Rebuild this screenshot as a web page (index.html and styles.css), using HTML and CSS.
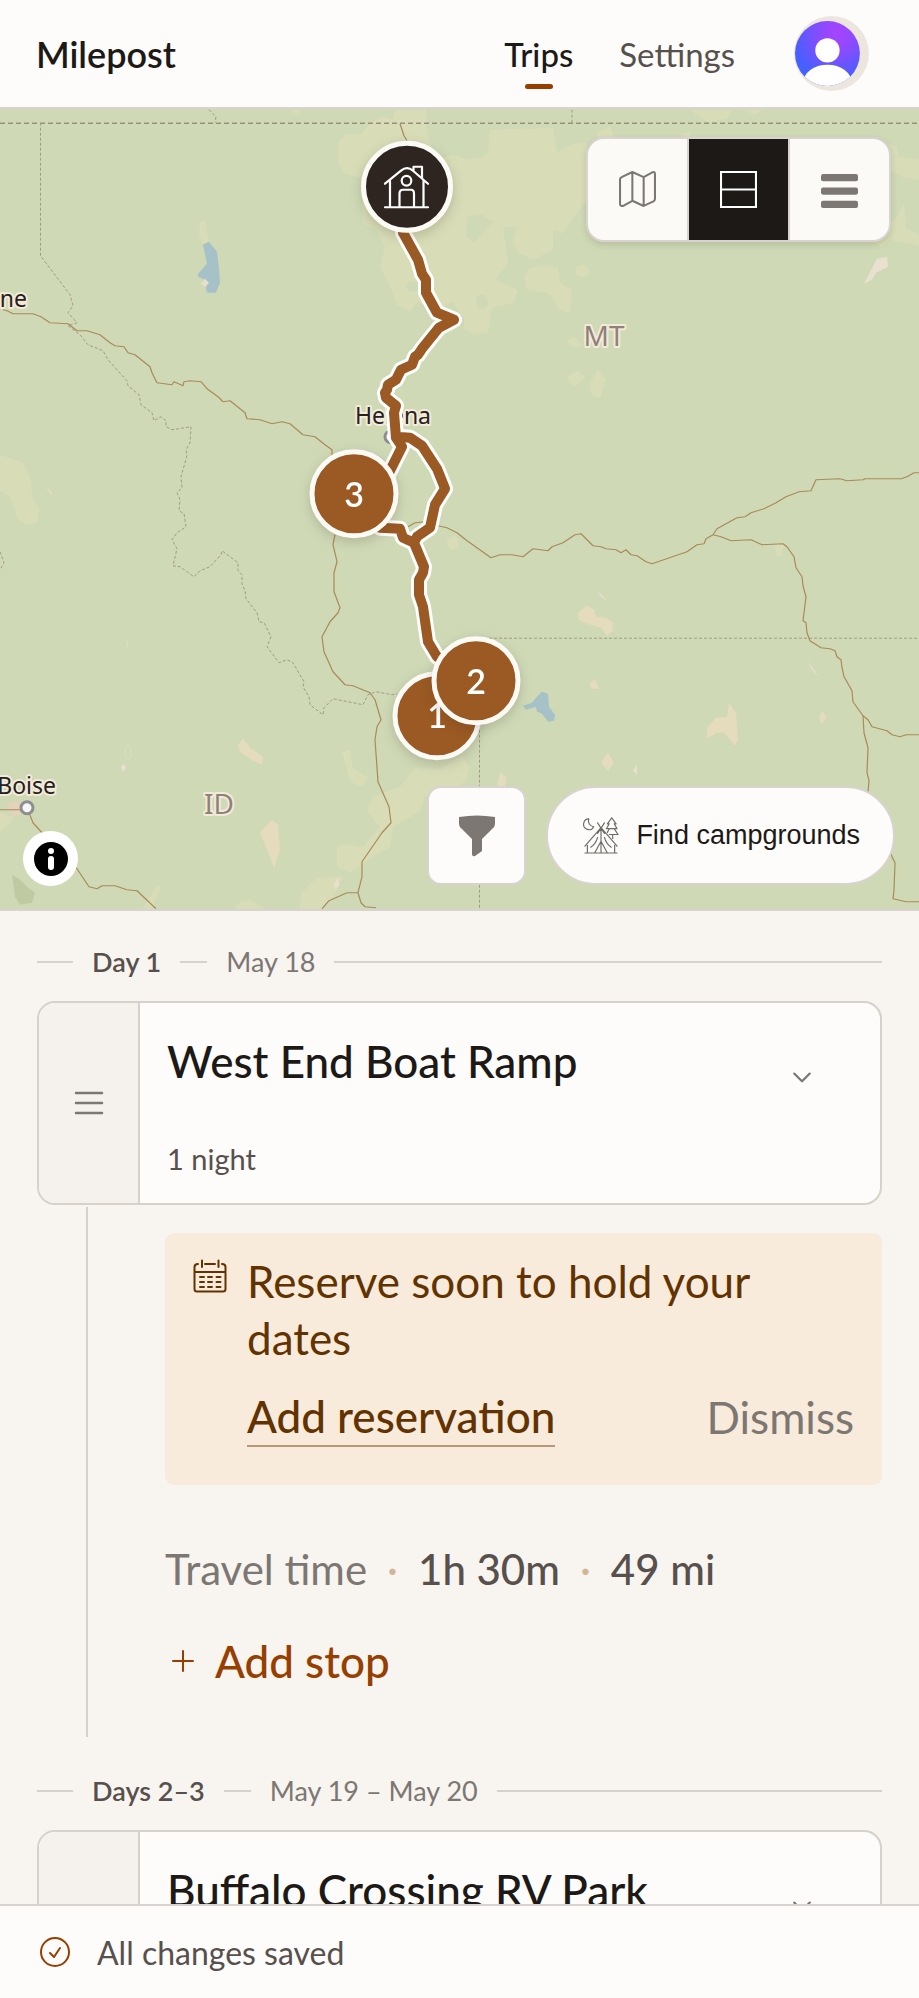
FILE: index.html
```html
<!DOCTYPE html>
<html lang="en">
<head>
    <meta charset="UTF-8">
    <meta name="viewport" content="width=device-width, initial-scale=1.0">
    <title>Milepost - Trips</title>
    <link rel="stylesheet" href="styles.css">
</head>
<body>

    <header class="topbar">
        <a href="#" class="brand">Milepost</a>
        <nav class="nav">
            <a href="#" class="nav-link active">Trips</a>
            <a href="#" class="nav-link">Settings</a>
        </nav>
        <button class="avatar" aria-label="Account">
            <svg viewBox="0 0 74 74">
                <defs>
                    <radialGradient id="avatarFill" cx="0.65" cy="0.2" r="0.7">
                        <stop offset="0" stop-color="#a544ff"/>
                        <stop offset="0.3" stop-color="#9448ff"/>
                        <stop offset="1" stop-color="#4560ff"/>
                    </radialGradient>
                    <clipPath id="avatarClip"><circle cx="33" cy="37" r="32"/></clipPath>
                </defs>
                <circle cx="37" cy="37" r="37" fill="#ece6df"/>
                <circle cx="33" cy="37" r="32" fill="url(#avatarFill)"/>
                <g clip-path="url(#avatarClip)" fill="#fff">
                    <circle cx="33" cy="34" r="12"/>
                    <ellipse cx="33" cy="66" rx="24" ry="18"/>
                </g>
            </svg>
        </button>
    </header>

    <section class="map">
        <svg class="map-canvas" viewBox="0 109 919 801" preserveAspectRatio="xMidYMid slice" role="img" aria-label="Trip route map">
            <rect x="-500" y="-500" width="2000" height="2000" fill="#cfd9b6"/>

            <!-- grassland -->
            <g fill="#d8dcb7">
                <path d="M338 143L346 134L360 135L372 122L384 117L393 120L395 110L426 110L427 133L431 146L441 160L450 155L459 156L466 160L480 158L488 153L490 130L553 128L557 153L572 144L587 143L587 200L583 205L567 227L553 250L533 260L517 252L513 242L517 227L503 227L508 263L495 280L518 290L513 303L492 308L488 332L477 335L465 330L463 317L452 302L435 312L418 302L410 312L397 305L390 287L380 267L385 247L375 228L363 225L362 205L370 180L345 174L338 163Z"/>
                <path d="M524 278L530 268L545 266L558 268L560 283L572 290L570 314L560 310L548 293L527 290Z"/>
                <ellipse cx="582" cy="271" rx="7" ry="6"/>
                <path d="M567 341L574 337L582 345L574 348Z"/>
                <path d="M568 377L577 371L585 377L576 387L569 382Z"/>
                <path d="M590 383L598 370L606 380L600 398L592 396Z"/>
                <ellipse cx="453" cy="543" rx="6" ry="7"/>
                <path d="M0 455L23 463L31 480L32 498L39 508L37 523L27 525L18 520L10 497L0 491Z"/>
                <path d="M689 110L732 110L727 119L708 122Z"/>
                <path d="M742 110L762 110L755 115Z"/>
                <path d="M598 132L610 127L613 134L609 140L598 140Z"/>
                <path d="M682 134L690 132L691 140L680 140Z"/>
                <path d="M889 144L897 147L898 157L919 160L919 180L905 178L889 170Z"/>
                <path d="M897 217L904 204L906 228L919 235L919 246L900 242L889 240L882 248L872 240Z"/>
                <path d="M291 110L301 110L296 115Z"/>
                <path d="M200 223L205 220L209 242L203 244L199 236Z"/>
                <path d="M342 752L350 750L353 768L368 778L362 787L350 782Z"/>
                <path d="M415 768L440 770L462 756L469 767L467 779L459 787L459 797L425 797L420 812L393 827L390 847L373 857L350 873L337 867L337 847L345 845L363 847L380 827L367 812L373 797L400 787Z"/>
                <path d="M300 909L302 893L317 878L343 877L335 895L322 909Z"/>
                <path d="M235 909L240 902L250 900L265 909Z"/>
                <path d="M143 909L157 885L161 887L152 909Z"/>
                <path d="M0 812L14 818L0 833Z"/>
                <path d="M775 545L784 544L781 557L776 555Z"/>
            </g>
            <g fill="#cfd9b6">
                <path d="M467 217L482 215L493 222L475 243L466 237Z"/>
                <ellipse cx="482" cy="302" rx="6" ry="7"/>
                <ellipse cx="413" cy="287" rx="7" ry="5"/>
                <path d="M553 230L565 235L562 246L553 250Z"/>
            </g>

            <!-- urban and bare ground -->
            <g fill="#e5dcbd">
                <path d="M238 745L243 739L250 748L263 757L262 765L253 761L240 752Z"/>
                <path d="M260 833L272 820L278 825L280 850L274 868L267 850Z"/>
                <path d="M578 613L587 606L594 610L596 617L606 618L613 623L612 632L607 636L601 628L584 623L579 620Z"/>
                <path d="M707 728L716 718L727 717L729 703L736 713L738 740L735 746L724 733L716 733L707 739Z"/>
                <path d="M589 684L595 679L599 689L592 689Z"/>
                <path d="M601 763L608 753L614 763L608 771Z"/>
                <path d="M819 718L823 711L826 718L822 724Z"/>
                <path d="M497 787L500 773L506 776L505 787Z"/>
            </g>
            <g fill="#e9e1cf">
                <path d="M877 259L887 257L888 267L876 273L872 280L864 284Z"/>
                <path d="M633 771L637 765L637 775Z"/>
                <path d="M121 767L124 764L126 768L123 772Z"/>
                <path d="M334 885L338 878L339 886L335 889Z"/>
                <path d="M598 592L608 601L601 597Z"/>
                <path d="M807 661L819 677L812 670Z"/>
                <path d="M46 487L52 496L51 492Z"/>
                <path d="M126 636L129 652L127 645Z"/>
                <path d="M8 803L18 801L22 812L14 817L7 811Z" fill="#e3d3ba"/>
            </g>
            <ellipse cx="128" cy="753" rx="3" ry="7" fill="none" stroke="#dfdfbd"/>
            <path d="M12 875L20 880L27 887L35 893L32 903L20 905L15 897Z" fill="#bfc9a2"/>

            <!-- lakes -->
            <g fill="#a6c1c7">
                <path d="M203 245L209 242L217 252L219 268L220 283L216 293L207 293L206 288L208 283L203 279L198 277L198 274L207 264Z"/>
                <path d="M523 706L532 703L536 698L542 692L548 694L549 707L555 715L554 721L548 722L542 714L537 712L536 707L526 710Z"/>
            </g>
            <path d="M201 284L205 279L209 283L205 287Z" fill="#e6dfca"/>

            <!-- state and country borders -->
            <path d="M0 123.5H919" fill="none" stroke="#98907b" stroke-width="1.4" stroke-dasharray="5 3"/>
            <g fill="none" stroke="#a09b83" stroke-dasharray="3 2">
                <path d="M209 110L216 117L215 123M572 110V123M479.500 725V910M489 638.500H919M0 552L4 563L0 570"/>
                <path d="M40.500 123V256L70 295L73 306L68 313L77 323L68 326L80 335L88 345L103 351L108 360L127 381L128 386L139 395L141 405L152 413L154 421L161 417L166 421L166 427L172 430L191 427L190 443L186 450L187 456L181 477L182 488L177 493L180 500L179 511L184 514L186 527L177 533L172 540L177 549L173 566L180 567L194 577L200 571L210 567L221 555L222 551L238 563L238 571L242 575L242 584L245 591L246 599L257 613L259 622L264 623L271 637L267 647L279 663L287 660L293 663L304 682L303 687L309 697L310 705L323 715L324 708L333 699L363 705L368 695L376 692L392 695L397 694"/>
            </g>

            <!-- roads -->
            <g fill="none" stroke="#a98a58" stroke-width="1.2" stroke-linejoin="round">
                <path d="M3 310L7 311L13 314H33L41 317L50 323L68 324L77 331L87 331L100 335L110 343L115 346L124 347L128 353L135 355L150 367L152 373L157 383L172 385L174 382L183 386L184 382L190 381L201 382L207 389L218 397L223 402L230 401L245 413L247 419L260 420L272 424L282 422L290 424L303 435L315 437L325 445L332 450V494"/>
                <path d="M335 535L333 545L337 562L334 573V592L340 608L338 613L330 622L322 637L324 652L333 672L345 685L353 686L370 693L375 700L381 720L377 727L375 740L378 782L389 807L391 823L382 833L362 862V877L358 893L361 903L365 907L376 908M358 893H347L329 901L322 909"/>
                <path d="M408 527L415 523L425 522L438 526L447 528L457 533L467 541L477 548L491 558L500 555L512 555L523 557L533 549L548 551L552 547L563 543L575 535L581 534L593 546L601 547L606 549L616 550L621 553L626 550L631 555L637 556L646 562L652 564L687 552L697 545L704 544L706 539L713 535L717 529L737 518L745 517L751 513L764 509L776 503L786 497L799 492L811 491L816 480L840 479L847 481L863 480L865 479H901L907 477L914 473H919"/>
                <path d="M713 535L721 537L731 541L751 540L762 545L783 544L787 547L794 557L796 568L802 577L803 586L806 597L803 621L806 623L807 633L810 641L821 648L830 649L835 651L837 657L841 660L842 668L844 677L852 691L853 702L863 716L868 720L872 727L887 731L892 735L900 737L906 735L919 735"/>
                <path d="M863 716L864 733L868 748L867 773L869 781L868 792L892 857L895 863L894 890L893 899L906 902H919"/>
                <path d="M0 810H20L27 808L33 823L42 833L77 869L89 887L97 889L102 886H115L127 890L137 891L156 909"/>
                <path d="M400 124L404 136L407 141"/>
            </g>

            <!-- towns and states -->
            <circle cx="391" cy="437" r="6" fill="#fff" stroke="#8d8d92" stroke-width="3"/>
            <circle cx="27" cy="808" r="6" fill="#f6f6f6" stroke="#8d8d92" stroke-width="3"/>
            <text class="town" x="393" y="424" text-anchor="middle">Helena</text>
            <text class="town" x="56" y="794" text-anchor="end">Boise</text>
            <text class="town" x="27" y="307" text-anchor="end">ne</text>
            <text class="state" x="604" y="346" text-anchor="middle">MT</text>
            <text class="state" x="219" y="814" text-anchor="middle">ID</text>

            <!-- trip route, casing first -->
            <defs>
                <path id="route" d="M403 228V233L418 260L422 274L426 280V293L437 313L454 320L439 328L422 349L418 355L415 357L412 365L401 370L396 380L388 385L387 390L385 393L386 398L396 406L394 413L396 438L402 447L388 475L354 494L380 528L400 529L403 538L414 543L424 567L423 573L419 580V595L423 607L428 642L437 657L470 680M396 437L410 438L422 446L437 469L445 489L435 505L430 528L417 537L414 543"/>
            </defs>
            <use href="#route" class="route-casing"/>
            <use href="#route" class="route-line"/>

            <g class="pin">
                <circle cx="437" cy="716" r="42"/>
                <text x="437" y="728">1</text>
            </g>
            <g class="pin">
                <circle cx="476" cy="681" r="42"/>
                <text x="476" y="694">2</text>
            </g>
            <g class="pin">
                <circle cx="354" cy="494" r="42"/>
                <text x="354" y="507">3</text>
            </g>
            <g class="pin pin-home">
                <circle cx="407" cy="187" r="43.500"/>
                <g fill="none" stroke="#fff" stroke-width="2.200" stroke-linecap="round" stroke-linejoin="round">
                    <path d="M385 207.500H428M390 207V181M423.500 207V181M385 184L401 171Q407 166 413 171L428 184M413.500 171V167H422V178"/>
                    <path d="M399.500 207V194Q399.500 190 403 190H411Q414 190 414 194V207"/>
                    <circle cx="406.500" cy="181" r="4.800"/>
                </g>
            </g>
        </svg>

        <div class="view-switch" role="group" aria-label="View">
            <button aria-label="Map view">
                <svg class="icon" viewBox="0 0 36 36" fill="none" stroke="currentColor" stroke-width="2" stroke-linejoin="round">
                    <path d="M1 8Q1 6.500 2.500 6L13 1L24 6L32 1.500Q35 0 35 3V27Q35 28.500 33.500 29.500L24 34L13 29L5 33.500Q1 35 1 32ZM13 1V29M24 6V34"/>
                </svg>
            </button>
            <button class="selected" aria-label="Split view" aria-pressed="true">
                <svg class="icon" viewBox="0 0 36 36" fill="none" stroke="currentColor" stroke-width="2">
                    <path d="M1 1H35V35H1ZM1 18H35"/>
                </svg>
            </button>
            <button aria-label="List view">
                <svg class="icon" viewBox="0 0 36 36" fill="currentColor">
                    <rect y="3" width="36" height="7" rx="2"/>
                    <rect y="16" width="36" height="7" rx="2"/>
                    <rect y="29" width="36" height="7" rx="2"/>
                </svg>
            </button>
        </div>

        <button class="map-info" aria-label="Map attribution">
            <svg viewBox="0 0 34 34">
                <circle cx="17" cy="17" r="17"/>
                <circle cx="17" cy="9" r="3" fill="#fff"/>
                <rect x="14" y="14" width="6" height="14" rx="3" fill="#fff"/>
            </svg>
        </button>

        <div class="map-actions">
            <button class="filter-btn" aria-label="Filter">
                <svg viewBox="0 0 38 42" fill="currentColor">
                    <path d="M1 2Q19 -1 37 2V9Q37 12 34 14L24 24V36L17 41Q14 42 14 39V24L4 14Q1 12 1 9Z"/>
                </svg>
            </button>
            <button class="find-btn">
                <svg class="icon" viewBox="0 0 36 38" fill="none" stroke="#6f6b67" stroke-width="1.200" stroke-linecap="round" stroke-linejoin="round">
                    <path d="M5 2A5.500 5.500 0 1 0 10 10A6 6 0 0 1 5 2Z"/>
                    <path d="M14 6L21 17M21 6L14 17M17.500 11L1 30M17.500 11L34 30M1 37H34M3.500 29V37M31.500 29V37M17.500 13V25L11 37M17.500 25L24 37M17.500 27V37M14 21Q12 28 7 31M21 21Q23 28 28 31"/>
                    <path d="M28.500 1L24 7H26L23 12H26M28.500 1L33 7H31L34 12H24M26 12L24 16M31 12L35 18H26M29.500 18V22"/>
                </svg>
                Find campgrounds
            </button>
        </div>
    </section>

    <main class="itinerary">
        <h2 class="day-head">
            <span class="day-label">Day 1</span>
            <span class="day-dates">May 18</span>
        </h2>

        <article class="stop-card">
            <button class="drag-handle" aria-label="Reorder stop">
                <svg viewBox="0 0 30 24" stroke="currentColor" stroke-width="2.500" stroke-linecap="round">
                    <path d="M2 2H28M2 12H28M2 22H28"/>
                </svg>
            </button>
            <div class="stop-body">
                <div>
                    <h3>West End Boat Ramp</h3>
                    <p class="nights">1 night</p>
                </div>
                <button class="expand" aria-label="Show details">
                    <svg viewBox="0 0 18 12" fill="none" stroke="currentColor" stroke-width="2" stroke-linecap="round" stroke-linejoin="round">
                        <path d="M2 2L9 9L16 2"/>
                    </svg>
                </button>
            </div>
        </article>

        <div class="leg">
            <div class="notice">
                <svg class="notice-icon" viewBox="0 0 34 34" fill="none" stroke="currentColor" stroke-width="2" stroke-linecap="round">
                    <path d="M5 5Q1.500 5 1.500 8V30Q1.500 32.500 4 32.500H30Q32.500 32.500 32.500 30V8Q32.500 5 29 5M12 5H22M1.500 13H32.500M9 1.500V8M25.500 1.500V8"/>
                    <path d="M7 18H11M15 18H19M23.500 18H27.500M7 23H11M15 23H19M23.500 23H27.500M7 28H11M15 28H19M23.500 28H27.500"/>
                </svg>
                <div class="notice-body">
                    <p>Reserve soon to hold your dates</p>
                    <div class="notice-actions">
                        <a href="#" class="reserve-link">Add reservation</a>
                        <button class="dismiss">Dismiss</button>
                    </div>
                </div>
            </div>

            <p class="travel">
                <span>Travel time</span>
                <span class="sep">·</span>
                <span class="value">1h 30m</span>
                <span class="sep">·</span>
                <span class="value">49 mi</span>
            </p>

            <button class="add-stop">
                <svg viewBox="0 0 24 24" stroke="currentColor" stroke-width="2" stroke-linecap="round">
                    <path d="M12 2V22M2 12H22"/>
                </svg>
                Add stop
            </button>
        </div>

        <h2 class="day-head">
            <span class="day-label">Days 2–3</span>
            <span class="day-dates">May 19 – May 20</span>
        </h2>

        <article class="stop-card">
            <button class="drag-handle" aria-label="Reorder stop">
                <svg viewBox="0 0 30 24" stroke="currentColor" stroke-width="2.500" stroke-linecap="round">
                    <path d="M2 2H28M2 12H28M2 22H28"/>
                </svg>
            </button>
            <div class="stop-body">
                <h3>Buffalo Crossing RV Park</h3>
                <button class="expand" aria-label="Show details">
                    <svg viewBox="0 0 18 12" fill="none" stroke="currentColor" stroke-width="2" stroke-linecap="round" stroke-linejoin="round">
                        <path d="M2 2L9 9L16 2"/>
                    </svg>
                </button>
            </div>
        </article>
    </main>

    <footer class="status">
        <svg viewBox="0 0 32 32" fill="none" stroke="currentColor" stroke-width="2" stroke-linecap="round" stroke-linejoin="round">
            <circle cx="16" cy="16" r="14"/>
            <path d="M11 17L15 21L21 12"/>
        </svg>
        All changes saved
    </footer>

</body>
</html>
```

FILE: styles.css
```css
* {
    box-sizing: border-box;
}

body {
    margin: 0;
    height: 100vh;
    display: flex;
    flex-direction: column;
    overflow: hidden;
    font-family: Lato, "Liberation Sans", sans-serif;
    color: #1c1917;
    background-color: #f8f4ef;
}

h2, h3, p {
    margin: 0;
}

a {
    color: inherit;
    text-decoration: none;
}

button {
    padding: 0;
    border: 0;
    background: none;
    color: inherit;
    font: inherit;
    cursor: pointer;
}

svg {
    display: block;
    flex: none;
}

/* top bar */
.topbar {
    display: flex;
    align-items: center;
    padding: 16px 50px 16px 36px;
    background-color: #fdfcfa;
    border-bottom: 2px solid #d8d3ce;
}

.brand {
    margin-right: auto;
    font-size: 36px;
    font-weight: 600;
    line-height: 44px;
}

.nav {
    display: flex;
    gap: 46px;
    margin-right: 59px;
}

.nav-link {
    position: relative;
    font-size: 33px;
    line-height: 40px;
    color: #57504c;
}

.nav-link.active {
    color: #1c1917;
    font-weight: 500;
}

.nav-link.active::after {
    content: "";
    position: absolute;
    left: 50%;
    bottom: -15px;
    width: 28px;
    height: 5px;
    margin-left: -14px;
    border-radius: 3px;
    background-color: #963f00;
}

.avatar svg {
    width: 75px;
    height: 75px;
}

/* map */
.map {
    position: relative;
    flex: 5 1 0;
    min-height: 0;
    border-bottom: 2px solid #d8d3ce;
}

.map-canvas {
    width: 100%;
    height: 100%;
}

.town,
.state {
    font-family: "Noto Sans", sans-serif;
    font-size: 23px;
    fill: #25211e;
    stroke: #f3ead8;
    stroke-width: 4px;
    stroke-linejoin: round;
    paint-order: stroke;
}

.state {
    font-size: 28px;
    fill: #8f827b;
}

.route-casing,
.route-line {
    fill: none;
    stroke: #fff;
    stroke-width: 16px;
    stroke-linejoin: round;
}

.route-line {
    stroke: #9b5923;
    stroke-width: 10px;
}

.pin {
    fill: #9b5923;
    filter: drop-shadow(0 4px 6px rgba(60, 50, 30, 0.2));
}

.pin > circle {
    stroke: #fbfaf5;
    stroke-width: 5px;
}

.pin text {
    fill: #fff;
    font-size: 34px;
    font-weight: 600;
    text-anchor: middle;
}

.pin-home {
    fill: #2f2520;
}

.icon {
    width: 37px;
    height: 37px;
}

.view-switch {
    position: absolute;
    top: 28px;
    right: 28px;
    display: flex;
    gap: 2px;
    overflow: hidden;
    border: 2px solid #d8d3ce;
    border-radius: 18px;
    background-color: #d8d3ce;
    box-shadow: 0 3px 6px rgba(60, 50, 30, 0.15);
}

.view-switch button {
    display: grid;
    place-items: center;
    width: 99px;
    height: 101px;
    background-color: #fbfaf7;
    color: #7c7773;
}

.view-switch .selected {
    background-color: #1d1916;
    color: #fff;
}

.map-info {
    position: absolute;
    left: 23px;
    bottom: 23px;
    display: grid;
    place-items: center;
    width: 55px;
    height: 55px;
    border-radius: 50%;
    background-color: #fff;
}

.map-info svg {
    width: 34px;
    height: 34px;
}

.map-actions {
    position: absolute;
    right: 24px;
    bottom: 24px;
    display: flex;
    gap: 20px;
}

.filter-btn,
.find-btn {
    height: 99px;
    border: 2px solid #d8d3ce;
    border-radius: 14px;
    background-color: #fdfcfa;
}

.filter-btn {
    display: grid;
    place-items: center;
    width: 99px;
    color: #7c7773;
}

.filter-btn svg {
    width: 38px;
    height: 42px;
}

.find-btn {
    display: flex;
    align-items: center;
    gap: 16px;
    padding: 0 33px 0 35px;
    border-radius: 50px;
    font-family: "Liberation Sans", Arial, sans-serif;
    font-size: 27px;
}

/* itinerary */
.itinerary {
    flex: 6 1 0;
    min-height: 0;
    overflow-y: auto;
    scrollbar-width: none;
    padding: 32px 37px 0;
}

.day-head {
    display: flex;
    align-items: center;
    gap: 19px;
    margin-bottom: 20px;
    font-size: 27px;
    font-weight: 400;
    line-height: 38px;
}

.day-head::before,
.day-head::after {
    content: "";
    width: 36px;
    height: 2px;
    background-color: #d6d1cb;
}

.day-head::after {
    flex: 1;
}

.day-label {
    display: flex;
    align-items: center;
    gap: 19px;
    font-weight: 600;
    color: #57504c;
}

.day-label::after {
    content: "";
    width: 27px;
    height: 2px;
    background-color: #d6d1cb;
}

.day-dates {
    color: #7c7773;
}

.stop-card {
    display: flex;
    min-height: 204px;
    overflow: hidden;
    border: 2px solid #d6d1cb;
    border-radius: 18px;
    background-color: #fdfcfa;
}

.drag-handle {
    display: grid;
    place-items: center;
    width: 101px;
    border-right: 2px solid #d6d1cb;
    background-color: #f5f2ee;
    color: #7c7773;
}

.drag-handle svg {
    width: 30px;
    height: 24px;
}

.stop-body {
    flex: 1;
    display: flex;
    justify-content: space-between;
    padding: 30px 68px 24px 27px;
}

.stop-body h3 {
    font-size: 44px;
    font-weight: 500;
    line-height: 56px;
}

.nights {
    margin-top: 50px;
    font-size: 29px;
    line-height: 40px;
    color: #57504c;
}

.expand {
    align-self: flex-start;
    margin-top: 38px;
    color: #7c7773;
}

.expand svg {
    width: 20px;
    height: 14px;
}

.leg {
    margin: 2px 0 35px 49px;
    padding: 26px 0 48px 77px;
    border-left: 2px solid #d6d1cb;
}

.notice {
    display: flex;
    gap: 20px;
    padding: 20px 28px 38px;
    border-radius: 9px;
    background-color: #f8ebdb;
    color: #623300;
    font-size: 44px;
    line-height: 57px;
}

.notice-icon {
    width: 34px;
    height: 34px;
    margin-top: 6px;
}

.notice-body {
    flex: 1;
}

.notice-actions {
    display: flex;
    justify-content: space-between;
    margin-top: 21px;
}

.reserve-link {
    border-bottom: 2px solid #b99878;
    font-weight: 500;
}

.dismiss {
    color: #7c7773;
}

.travel {
    display: flex;
    gap: 20px;
    margin-top: 56px;
    font-size: 42px;
    line-height: 56px;
    color: #7c7773;
}

.travel .sep {
    color: #d0b697;
}

.travel .value {
    color: #57504c;
    font-weight: 500;
}

.add-stop {
    display: flex;
    align-items: center;
    gap: 20px;
    margin-top: 36px;
    padding-left: 6px;
    font-size: 44px;
    font-weight: 500;
    line-height: 56px;
    color: #963f00;
}

.add-stop svg {
    width: 24px;
    height: 24px;
}

/* save status */
.status {
    display: flex;
    align-items: center;
    gap: 26px;
    height: 94px;
    padding: 0 39px;
    border-top: 2px solid #d8d3ce;
    background-color: #fdfcfa;
    font-size: 32px;
    color: #57504c;
}

.status svg {
    width: 32px;
    height: 32px;
    color: #963f00;
}
```
